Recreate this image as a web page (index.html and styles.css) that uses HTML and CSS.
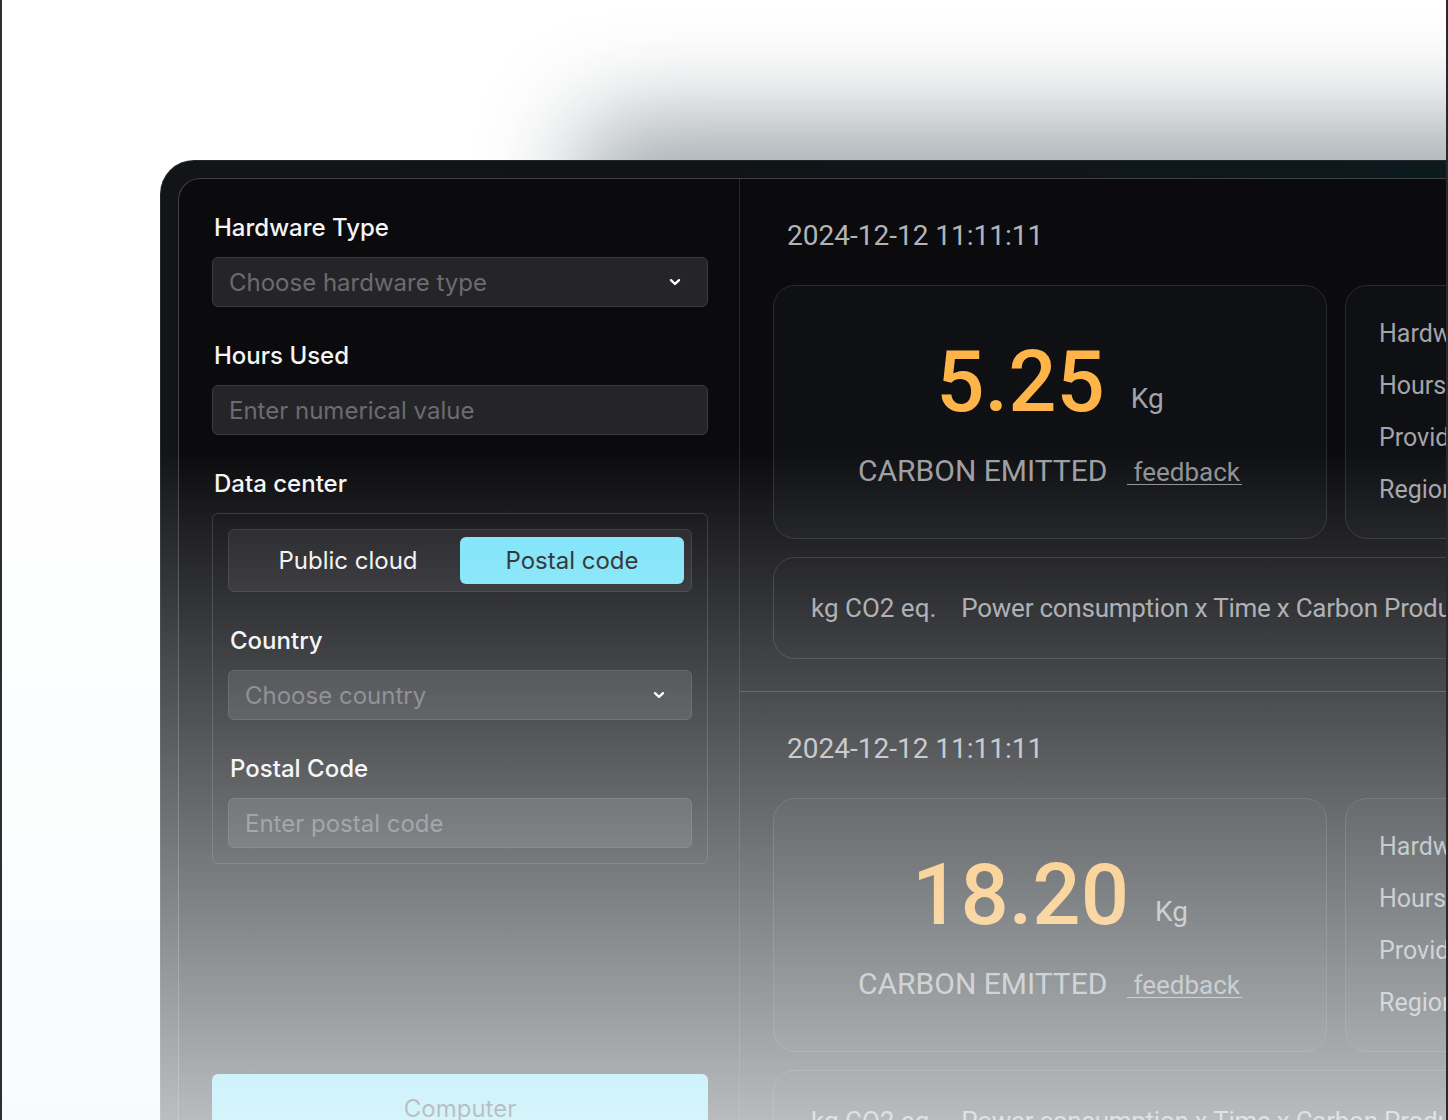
FILE: index.html
```html
<!DOCTYPE html>
<html lang="en">
<head>
<meta charset="utf-8">
<title>Carbon Calculator</title>
<link rel="stylesheet" href="styles.css">
</head>
<body>
<div class="page">
  <div class="device">
    <div class="screen">
      <aside class="form">
        <div class="field">
          <label class="label">Hardware Type</label>
          <div class="control select">
            <span class="placeholder">Choose hardware type</span>
            <svg class="chevron" viewBox="0 0 14 14" width="14" height="14"><path d="M3 5.2l4 3.8 4-3.8" fill="none" stroke="#fff" stroke-width="2.4" stroke-linecap="round" stroke-linejoin="round"/></svg>
          </div>
        </div>
        <div class="field">
          <label class="label">Hours Used</label>
          <div class="control"><span class="placeholder">Enter numerical value</span></div>
        </div>
        <div class="field">
          <label class="label">Data center</label>
          <div class="group">
            <div class="tabs">
              <button class="tab">Public cloud</button>
              <button class="tab active">Postal code</button>
            </div>
            <div class="field">
              <label class="label">Country</label>
              <div class="control select">
                <span class="placeholder">Choose country</span>
                <svg class="chevron" viewBox="0 0 14 14" width="14" height="14"><path d="M3 5.2l4 3.8 4-3.8" fill="none" stroke="#fff" stroke-width="2.4" stroke-linecap="round" stroke-linejoin="round"/></svg>
              </div>
            </div>
            <div class="field">
              <label class="label">Postal Code</label>
              <div class="control"><span class="placeholder">Enter postal code</span></div>
            </div>
          </div>
        </div>
        <button class="submit">Computer</button>
      </aside>

      <main class="history">
        <section class="record">
          <div class="stamp">2024-12-12 11:11:11</div>
          <div class="cards">
            <div class="card result">
              <div class="amount"><span class="value">5.25</span><span class="unit">Kg</span></div>
              <div class="caption"><span class="title">CARBON EMITTED</span><a class="feedback">feedback</a></div>
            </div>
            <div class="card details">
              <div class="row">Hardware Type</div>
              <div class="row">Hours Used</div>
              <div class="row">Provider</div>
              <div class="row">Region</div>
            </div>
          </div>
          <div class="formula"><span>kg CO2 eq.</span><span class="expr">Power consumption x Time x Carbon Production Intensity</span></div>
        </section>

        <section class="record">
          <div class="stamp">2024-12-12 11:11:11</div>
          <div class="cards">
            <div class="card result">
              <div class="amount"><span class="value">18.20</span><span class="unit">Kg</span></div>
              <div class="caption"><span class="title">CARBON EMITTED</span><a class="feedback">feedback</a></div>
            </div>
            <div class="card details">
              <div class="row">Hardware Type</div>
              <div class="row">Hours Used</div>
              <div class="row">Provider</div>
              <div class="row">Region</div>
            </div>
          </div>
          <div class="formula"><span>kg CO2 eq.</span><span class="expr">Power consumption x Time x Carbon Production Intensity</span></div>
        </section>
      </main>
    </div>
  </div>
  <div class="fade"></div>
</div>
</body>
</html>
```

FILE: styles.css
```css
* {
  box-sizing: border-box;
}

html, body {
  margin: 0;
  padding: 0;
  background: #ffffff;
}

.page {
  position: relative;
  width: 1448px;
  height: 1120px;
  overflow: hidden;
  background: #ffffff;
  border-left: 2px solid #2e2e30;
  border-right: 2px solid #2a2a2c;
}

/* device bezel */
.device {
  margin: 160px 0 0 158px;
  width: 1400px;
  height: 1000px;
  padding: 17px 0 0 17px;
  border: 1px solid #25272b;
  border-right: 0;
  border-bottom: 0;
  border-radius: 34px 0 0 0;
  background: linear-gradient(90deg, #131416 0%, #101417 40%, #0c1a1f 100%);
  box-shadow: 420px -40px 100px rgba(40, 60, 70, 0.44);
}

.screen {
  display: flex;
  height: 100%;
  border: 1px solid #404145;
  border-right: 0;
  border-bottom: 0;
  border-radius: 22px 0 0 0;
  background: #0b0b0e;
  overflow: hidden;
}

/* left form column */
.form {
  flex: 0 0 561px;
  display: flex;
  flex-direction: column;
  padding: 35px 31px 0 33px;
  border-right: 1px solid #26272b;
  font-family: Inter, "Noto Sans", sans-serif;
}

.field + .field {
  margin-top: 35px;
}

.label {
  display: block;
  margin-bottom: 15px;
  padding-left: 2px;
  font-size: 24px;
  line-height: 28px;
  font-weight: 500;
  color: #f5f5f6;
}

.control {
  display: flex;
  align-items: center;
  height: 50px;
  padding: 0 16px;
  border: 1px solid #3a3a3f;
  border-radius: 6px;
  background: #252528;
}

.placeholder {
  flex: 1;
  font-size: 24px;
  color: #6b6b71;
}

.chevron {
  margin-right: 9px;
}

.group {
  padding: 15px;
  border: 1px solid #2e2f33;
  border-radius: 6px;
}

.tabs {
  display: grid;
  grid-template-columns: 1fr 1fr;
  height: 63px;
  padding: 7px;
  border: 1px solid #2f3034;
  border-radius: 6px;
  background: #1b1b1f;
  margin-bottom: 35px;
}

.tab {
  border: 0;
  border-radius: 6px;
  background: transparent;
  font-family: Inter, "Noto Sans", sans-serif;
  font-size: 24px;
  color: #f2f2f3;
  padding: 0;
}

.tab.active {
  background: #7ae3f9;
  color: #1d1d20;
}

.submit {
  margin-top: 210px;
  height: 68px;
  border: 0;
  border-radius: 6px;
  background: #7ae3f9;
  font-family: Inter, "Noto Sans", sans-serif;
  font-size: 24px;
  color: #1d1d20;
}

/* right history column */
.history {
  flex: 1;
  min-width: 0;
  font-family: Roboto, "Liberation Sans", sans-serif;
}

.record {
  padding: 39px 0 32px 33px;
  border-bottom: 1px solid #35363b;
}

.stamp {
  padding-left: 14px;
  font-size: 28px;
  line-height: 36px;
  color: #b3b4b9;
  margin-bottom: 31px;
}

.cards {
  display: flex;
  gap: 18px;
  margin-bottom: 18px;
}

.card {
  flex: 0 0 auto;
  height: 254px;
  border: 1px solid #2a2b30;
  border-radius: 22px;
  background: #0f1013;
}

.result {
  width: 554px;
  display: flex;
  flex-direction: column;
  align-items: center;
  padding-top: 54px;
}

.amount {
  display: flex;
  align-items: baseline;
  line-height: 1;
}

.value {
  font-size: 85px;
  font-weight: 500;
  color: #feb449;
}

.unit {
  margin-left: 26px;
  font-size: 28px;
  color: #a3a4a9;
  position: relative;
  top: -3px;
}

.caption {
  display: flex;
  align-items: baseline;
  margin-top: 30px;
  line-height: 32px;
}

.title {
  font-size: 30px;
  color: #9d9ea3;
}

.feedback {
  display: inline-block;
  margin-left: 19px;
  padding-left: 7px;
  padding-right: 2px;
  font-size: 26px;
  line-height: 24px;
  color: #8f9095;
  border-bottom: 1px solid #8f9095;
}

.details {
  width: 420px;
  padding: 22px 0 0 33px;
}

.row {
  font-size: 25px;
  line-height: 52px;
  color: #a3a4a9;
  white-space: nowrap;
}

.formula {
  display: flex;
  align-items: center;
  gap: 25px;
  width: 1000px;
  height: 102px;
  padding-left: 37px;
  border: 1px solid #2a2b30;
  border-radius: 22px;
  font-size: 26px;
  color: #a0a1a6;
  white-space: nowrap;
}

.expr {
  letter-spacing: -0.25px;
}

/* light wash over the lower part of the page */
.fade {
  position: absolute;
  inset: 0;
  pointer-events: none;
  background: linear-gradient(180deg, rgba(245, 250, 252, 0) 450px, rgba(245, 250, 252, 0.74) 1120px);
}
```
